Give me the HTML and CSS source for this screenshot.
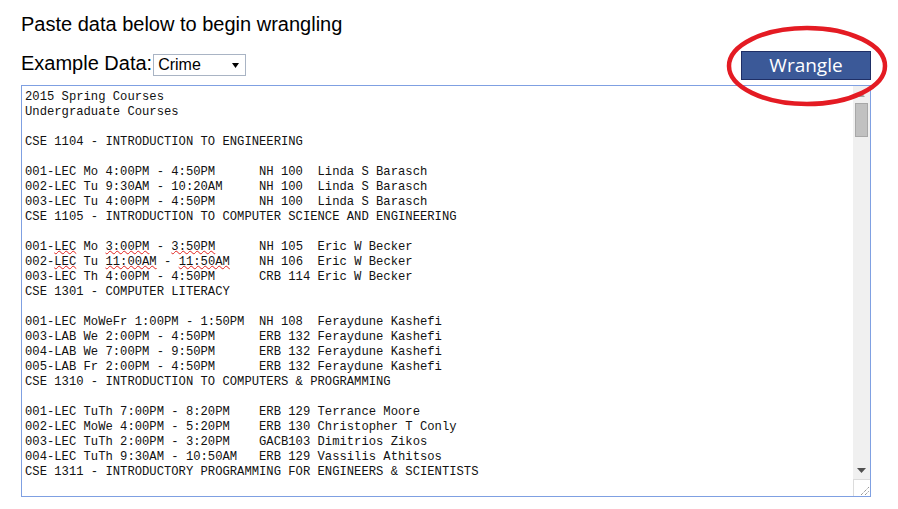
FILE: index.html
```html
<!DOCTYPE html>
<html lang="en">
<head>
<meta charset="utf-8">
<title>Wrangle</title>
<link rel="stylesheet" href="styles.css">
</head>
<body>
<div class="page">
  <h1 class="title">Paste data below to begin wrangling</h1>
  <div class="toolbar">
    <div class="example">
      <span class="label">Example Data:</span>
      <div class="select">
        <span class="select-text">Crime</span>
        <svg class="select-arrow" width="7" height="5" viewBox="0 0 7 5"><polygon points="0,0 7,0 3.5,5" fill="#000"/></svg>
      </div>
    </div>
    <button class="wrangle">Wrangle</button>
  </div>
  <div class="textarea">
    <pre class="content">2015 Spring Courses
Undergraduate Courses

CSE 1104 - INTRODUCTION TO ENGINEERING

001-LEC Mo 4:00PM - 4:50PM      NH 100  Linda S Barasch
002-LEC Tu 9:30AM - 10:20AM     NH 100  Linda S Barasch
003-LEC Tu 4:00PM - 4:50PM      NH 100  Linda S Barasch
CSE 1105 - INTRODUCTION TO COMPUTER SCIENCE AND ENGINEERING

001-<span class="sp">LEC</span> Mo <span class="sp">3:00PM</span> - <span class="sp">3:50PM</span>      NH 105  Eric W Becker
002-<span class="sp">LEC</span> Tu <span class="sp">11:00AM</span> - <span class="sp">11:50AM</span>    NH 106  Eric W Becker
003-LEC Th 4:00PM - 4:50PM      CRB 114 Eric W Becker
CSE 1301 - COMPUTER LITERACY

001-LEC MoWeFr 1:00PM - 1:50PM  NH 108  Feraydune Kashefi
003-LAB We 2:00PM - 4:50PM      ERB 132 Feraydune Kashefi
004-LAB We 7:00PM - 9:50PM      ERB 132 Feraydune Kashefi
005-LAB Fr 2:00PM - 4:50PM      ERB 132 Feraydune Kashefi
CSE 1310 - INTRODUCTION TO COMPUTERS &amp; PROGRAMMING

001-LEC TuTh 7:00PM - 8:20PM    ERB 129 Terrance Moore
002-LEC MoWe 4:00PM - 5:20PM    ERB 130 Christopher T Conly
003-LEC TuTh 2:00PM - 3:20PM    GACB103 Dimitrios Zikos
004-LEC TuTh 9:30AM - 10:50AM   ERB 129 Vassilis Athitsos
CSE 1311 - INTRODUCTORY PROGRAMMING FOR ENGINEERS &amp; SCIENTISTS</pre>
    <div class="scrollbar">
      <div class="sb-btn">
        <svg width="7" height="4" viewBox="0 0 7 4"><polygon points="0,4 7,4 3.5,0" fill="#a3a3a3"/></svg>
      </div>
      <div class="sb-track">
        <div class="sb-thumb"></div>
      </div>
      <div class="sb-btn">
        <svg width="9" height="5" viewBox="0 0 9 5"><polygon points="0,0 9,0 4.5,5" fill="#505050"/></svg>
      </div>
      <div class="sb-corner">
        <svg width="9" height="9" viewBox="0 0 9 9">
          <line x1="1" y1="9" x2="9" y2="1" stroke="#6b6b6b" stroke-width="1" stroke-dasharray="1 1"/>
          <line x1="5" y1="9" x2="9" y2="5" stroke="#6b6b6b" stroke-width="1" stroke-dasharray="1 1"/>
        </svg>
      </div>
    </div>
  </div>
  <svg class="annotation" width="170" height="90" viewBox="0 0 170 90">
    <ellipse cx="85" cy="45" rx="78" ry="38" fill="none" stroke="#e41b23" stroke-width="4.5"/>
  </svg>
</div>
</body>
</html>
```

FILE: styles.css
```css
html, body {
  margin: 0;
  padding: 0;
  background: #ffffff;
}

body {
  font-family: "Liberation Sans", Arial, sans-serif;
  color: #000;
}

.page {
  position: relative;
  width: 850px;
  padding: 12px 0 0 21px;
}

.title {
  margin: 0;
  font-size: 20px;
  line-height: 24px;
  font-weight: normal;
}

.toolbar {
  margin-top: 15px;
  display: flex;
  justify-content: space-between;
  align-items: flex-start;
  height: 29px;
}

.example {
  display: flex;
  align-items: flex-start;
}

.label {
  font-size: 20px;
  line-height: 24px;
}

.select {
  margin-top: 3px;
  margin-left: 1px;
  box-sizing: border-box;
  width: 93px;
  height: 22px;
  border: 1px solid #a9b4c4;
  display: flex;
  align-items: center;
  justify-content: space-between;
  padding: 0 6px 0 4px;
  background: #fff;
}

.select-text {
  font-size: 16px;
  line-height: 18px;
}

.select-arrow {
  display: block;
  margin-top: 1px;
}

.wrangle {
  box-sizing: border-box;
  width: 130px;
  height: 29px;
  margin: 0;
  padding: 0;
  background: #3b5998;
  border: 1px solid #1f2f66;
  color: #fff;
  font-family: "Open Sans", "Liberation Sans", sans-serif;
  font-size: 19px;
  line-height: 27px;
}

.textarea {
  margin-top: 5px;
  box-sizing: border-box;
  width: 850px;
  height: 412px;
  border: 1px solid #7fa0e2;
  display: flex;
  background: #fff;
}

.content {
  flex: 1;
  margin: 0;
  padding: 4px 0 0 3px;
  font-family: "Liberation Mono", "DejaVu Sans Mono", monospace;
  font-size: 12.2px;
  line-height: 15px;
  color: #111;
  white-space: pre;
  overflow: hidden;
}

.sp {
  text-decoration-line: underline;
  text-decoration-style: wavy;
  text-decoration-color: #e0201c;
  text-decoration-thickness: 1px;
  text-underline-offset: 0px;
}

.scrollbar {
  width: 17px;
  display: flex;
  flex-direction: column;
  background: #f0f0f0;
}

.sb-btn {
  height: 17px;
  display: flex;
  align-items: center;
  justify-content: center;
}

.sb-track {
  flex: 1;
  padding: 0 2px;
}

.sb-thumb {
  box-sizing: border-box;
  height: 34px;
  background: #c1c1c1;
  border: 1px solid #a8a8a8;
}

.sb-corner {
  box-sizing: border-box;
  height: 17px;
  background: #fff;
  border-top: 1px solid #dcdcdc;
  border-left: 1px solid #dcdcdc;
  display: flex;
  align-items: flex-end;
  justify-content: flex-end;
  padding: 0 1px 1px 0;
}

.sb-corner svg {
  display: block;
}

.annotation {
  position: absolute;
  left: 722px;
  top: 21px;
  pointer-events: none;
}
```
